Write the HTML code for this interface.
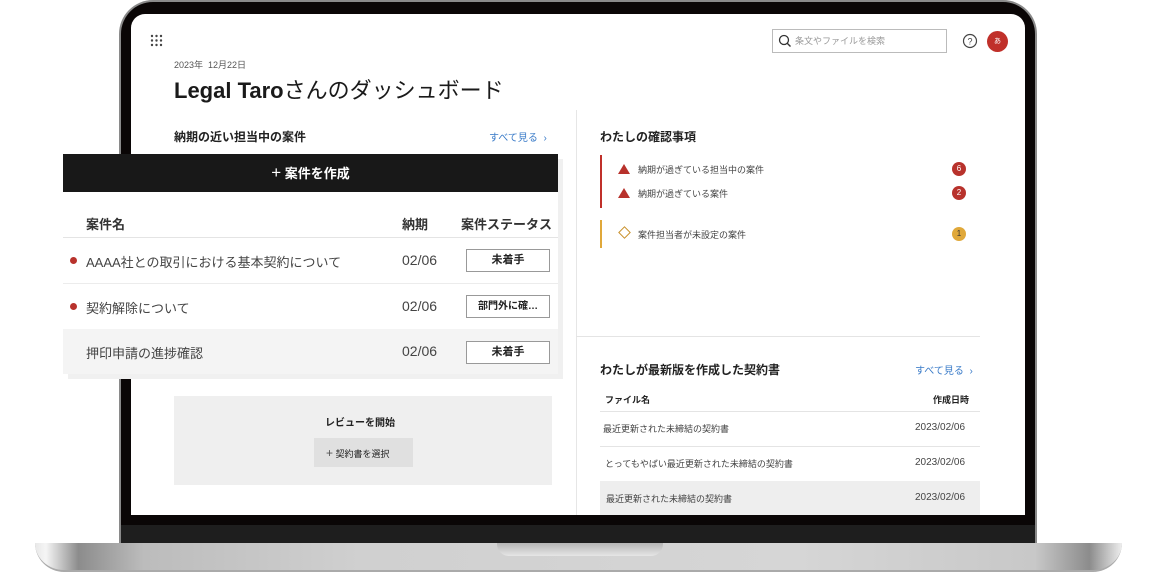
<!DOCTYPE html>
<html><head><meta charset="utf-8"><style>
*{margin:0;padding:0;box-sizing:border-box}
body{width:1156px;height:574px;background:#fff;position:relative;overflow:hidden;font-family:"Liberation Sans","Noto Sans CJK JP",sans-serif;color:#222}
.a{position:absolute}
.bezel{left:119px;top:0;width:918px;height:548px;background:#0a0606;border-radius:34px 34px 0 0;border:2px solid #8a8a8a;border-bottom:none}
.screen{left:131px;top:14px;width:894px;height:501px;background:#fff;border-radius:14px 14px 0 0;overflow:hidden}
.chin{left:121px;top:525px;width:914px;height:20px;background:#1e1e1e}
.base{left:35px;top:543px;width:1087px;height:29px;border-radius:0 0 30px 30px;background:linear-gradient(90deg,#e8e8e8 0,#f5f5f5 1%,#8c8c8c 4%,#bcbcbc 10%,#d0d0d0 30%,#d6d6d6 70%,#c8c8c8 92%,#8c8c8c 97%,#eee 100%);border-bottom:2px solid #aaa}
.notch{left:497px;top:543px;width:166px;height:13px;border-radius:0 0 12px 12px;background:linear-gradient(#b5b5b5,#e6e6e6)}
.t{position:absolute;white-space:nowrap}
.b{font-weight:bold}
.link{color:#3a7bc8;font-size:10px}
.badge{position:absolute;width:14px;height:14px;border-radius:50%;color:#fff;font-size:8px;text-align:center;line-height:14px}
.tri{position:absolute;width:0;height:0;border-left:6px solid transparent;border-right:6px solid transparent;border-bottom:10px solid #b8322c}
.hl{position:absolute;height:1px;background:#e4e4e4}
.st{position:absolute;left:403px;width:84px;height:23px;border:1px solid #999;background:#fff;font-size:11px;text-align:center;line-height:21px;font-weight:bold}
</style></head><body>
<div class="a bezel"></div>
<div class="a chin"></div>
<div class="a screen">
  <svg class="a" style="left:19px;top:20px" width="13" height="13"><g fill="#444"><circle cx="2" cy="2" r="1.2"/><circle cx="6.5" cy="2" r="1.2"/><circle cx="11" cy="2" r="1.2"/><circle cx="2" cy="6.5" r="1.2"/><circle cx="6.5" cy="6.5" r="1.2"/><circle cx="11" cy="6.5" r="1.2"/><circle cx="2" cy="11" r="1.2"/><circle cx="6.5" cy="11" r="1.2"/><circle cx="11" cy="11" r="1.2"/></g></svg>
  <div class="t" style="left:43px;top:44px;font-size:9px;color:#555">2023年&nbsp; 12月22日</div>
  <div class="t" style="left:43px;top:59px;font-size:22px;color:#1a1a1a"><span class="b">Legal Taro</span>さんのダッシュボード</div>
  <div class="t b" style="left:43px;top:114px;font-size:12px">納期の近い担当中の案件</div>
  <div class="t link" style="left:358px;top:115px">すべて見る &nbsp;›</div>
  <div class="a" style="left:641px;top:15px;width:175px;height:24px;border:1px solid #bbb"></div>
  <svg class="a" style="left:647px;top:20px" width="14" height="14"><circle cx="6" cy="6" r="4.5" fill="none" stroke="#333" stroke-width="1.3"/><path d="M9.2 9.2L12.5 12.5" stroke="#333" stroke-width="1.4"/></svg>
  <div class="t" style="left:664px;top:20px;font-size:9px;color:#999">条文やファイルを検索</div>
  <svg class="a" style="left:831px;top:19px" width="16" height="16"><circle cx="8" cy="8" r="6.5" fill="none" stroke="#444" stroke-width="1.2"/><text x="8" y="11.5" font-size="9" text-anchor="middle" fill="#444" font-family="Liberation Sans">?</text></svg>
  <div class="badge" style="left:856px;top:17px;width:21px;height:21px;line-height:21px;background:#c0302a;font-size:7px">あ</div>
  <div class="a" style="left:445px;top:96px;width:1px;height:405px;background:#e6e6e6"></div>
  <div class="t b" style="left:469px;top:114px;font-size:12px">わたしの確認事項</div>
  <div class="a" style="left:469px;top:141px;width:1.5px;height:53px;background:#c0302a"></div>
  <div class="tri" style="left:487px;top:150px"></div>
  <div class="t" style="left:507px;top:149px;font-size:9px;color:#444">納期が過ぎている担当中の案件</div>
  <div class="badge" style="left:821px;top:148px;background:#b8322c">6</div>
  <div class="tri" style="left:487px;top:174px"></div>
  <div class="t" style="left:507px;top:173px;font-size:9px;color:#444">納期が過ぎている案件</div>
  <div class="badge" style="left:821px;top:172px;background:#b8322c">2</div>
  <div class="a" style="left:469px;top:206px;width:1.5px;height:28px;background:#e0a83a"></div>
  <div class="a" style="left:489px;top:214px;width:9px;height:9px;border:1.3px solid #c8902a;transform:rotate(45deg)"></div>
  <div class="t" style="left:507px;top:214px;font-size:9px;color:#444">案件担当者が未設定の案件</div>
  <div class="badge" style="left:821px;top:213px;background:#e0a83a;color:#333">1</div>
  <div class="hl" style="left:445px;top:322px;width:404px"></div>
  <div class="t b" style="left:469px;top:347px;font-size:12px">わたしが最新版を作成した契約書</div>
  <div class="t link" style="left:784px;top:348px">すべて見る &nbsp;›</div>
  <div class="t b" style="left:474px;top:379px;font-size:9px">ファイル名</div>
  <div class="t b" style="left:802px;top:379px;font-size:9px">作成日時</div>
  <div class="hl" style="left:469px;top:397px;width:380px"></div>
  <div class="t" style="left:472px;top:408px;font-size:9px;color:#444">最近更新された未締結の契約書</div>
  <div class="t" style="left:784px;top:408px;font-size:10px;color:#444">2023/02/06</div>
  <div class="hl" style="left:469px;top:432px;width:380px"></div>
  <div class="t" style="left:474px;top:443px;font-size:9px;color:#444">とってもやばい最近更新された未締結の契約書</div>
  <div class="t" style="left:784px;top:443px;font-size:10px;color:#444">2023/02/06</div>
  <div class="a" style="left:469px;top:467px;width:380px;height:34px;background:#eeeeee"></div>
  <div class="t" style="left:475px;top:478px;font-size:9px;color:#444">最近更新された未締結の契約書</div>
  <div class="t" style="left:784px;top:478px;font-size:10px;color:#444">2023/02/06</div>
  <div class="a" style="left:43px;top:382px;width:378px;height:89px;background:#efefef"></div>
  <div class="t b" style="left:194px;top:400px;font-size:10px">レビューを開始</div>
  <div class="a" style="left:183px;top:424px;width:99px;height:29px;background:#e0e0e0"></div>
  <div class="t" style="left:195px;top:432px;font-size:9px"><span style="font-size:12px;color:#555">+</span> 契約書を選択</div>
</div>
<div class="a base"></div>
<div class="a notch"></div>
<div class="a" style="left:63px;top:154px;width:495px;height:220px;background:#fff;box-shadow:5px 5px 0 #f0f0f0">
  <div class="a" style="left:0;top:0;width:495px;height:38px;background:#181818;color:#fff;font-size:13px;text-align:center;line-height:38px;font-weight:bold"><span style="font-weight:normal;font-size:17px">+</span> 案件を作成</div>
  <div class="t b" style="left:23px;top:60px;font-size:13px;color:#333">案件名</div>
  <div class="t b" style="left:339px;top:60px;font-size:13px;color:#333">納期</div>
  <div class="t b" style="left:398px;top:60px;font-size:13px;color:#333">案件ステータス</div>
  <div class="hl" style="left:0;top:83px;width:495px"></div>
  <div class="a" style="left:7px;top:103px;width:7px;height:7px;border-radius:50%;background:#b8322c"></div>
  <div class="t" style="left:23px;top:98px;font-size:13px;color:#444">AAAA社との取引における基本契約について</div>
  <div class="t" style="left:339px;top:98px;font-size:14px;color:#444">02/06</div>
  <div class="st" style="top:95px">未着手</div>
  <div class="hl" style="left:0;top:129px;width:495px;background:#ececec"></div>
  <div class="a" style="left:7px;top:149px;width:7px;height:7px;border-radius:50%;background:#b8322c"></div>
  <div class="t" style="left:23px;top:144px;font-size:13px;color:#444">契約解除について</div>
  <div class="t" style="left:339px;top:144px;font-size:14px;color:#444">02/06</div>
  <div class="st" style="top:141px;font-size:10px">部門外に確…</div>
  <div class="a" style="left:0;top:175px;width:495px;height:45px;background:#f4f4f4"></div>
  <div class="t" style="left:23px;top:189px;font-size:13px;color:#444">押印申請の進捗確認</div>
  <div class="t" style="left:339px;top:189px;font-size:14px;color:#444">02/06</div>
  <div class="st" style="top:187px">未着手</div>
</div>
</body></html>
